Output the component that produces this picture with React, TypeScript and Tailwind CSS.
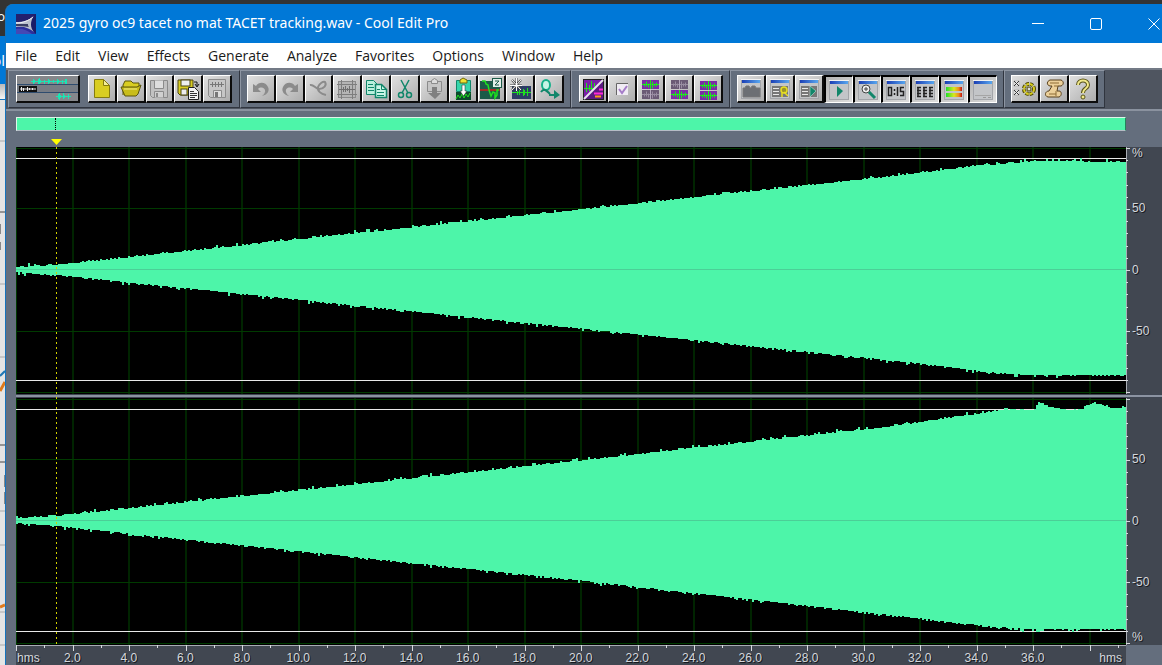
import type { ReactNode } from "react";

const menus = [
  "File",
  "Edit",
  "View",
  "Effects",
  "Generate",
  "Analyze",
  "Favorites",
  "Options",
  "Window",
  "Help",
];

const WAVE = "#4df5a9";
const TEAL = "#11866a";
const GRAY = "#8b8b8b";
const LIME = "#1fe01f";

/* ---------- waveform geometry ---------- */

const W = 1110;
const H = 247;
const MID = 123;
const STEP = 56.5;

type Point = [number, number];

function makeRandom(seed: number) {
  let s = seed;
  return () => {
    s = (s * 1103515245 + 12345) % 2147483648;
    return s / 2147483648;
  };
}

function levelAt(points: Point[], x: number) {
  for (let i = 1; i < points.length; i++) {
    const [x0, y0] = points[i - 1];
    const [x1, y1] = points[i];
    if (x <= x1) return y0 + ((y1 - y0) * (x - x0)) / (x1 - x0);
  }
  return points[points.length - 1][1];
}

function spike(r: number) {
  if (r > 0.97) return 3;
  if (r > 0.9) return 2;
  return r > 0.6 ? 1 : 0;
}

function envelope(top: Point[], bottom: Point[], seed: number) {
  const rand = makeRandom(seed);
  const upper: string[] = [];
  const lower: string[] = [];
  for (let x = 0; x < W; x += 2) {
    const up = Math.round(levelAt(top, x) - spike(rand()));
    const down = Math.round(levelAt(bottom, x) + spike(rand()));
    upper.push(`L${x} ${up}H${x + 2}`);
    lower.unshift(`L${x + 2} ${down}H${x}`);
  }
  return `M0 ${MID}${upper.join("")}${lower.join("")}Z`;
}

const leftPath = envelope(
  [[0, 120], [40, 118], [560, 63], [860, 31], [960, 19], [1020, 14], [1110, 15]],
  [[0, 125], [40, 128], [560, 181], [900, 216], [970, 225], [1010, 228], [1110, 228]],
  7,
);

const rightPath = envelope(
  [[0, 120], [40, 118], [560, 63], [870, 29], [960, 16], [985, 12], [1018, 12], [1022, 4], [1030, 8], [1040, 11], [1066, 13], [1072, 7], [1078, 5], [1090, 8], [1098, 11], [1110, 9]],
  [[0, 125], [40, 128], [560, 182], [900, 220], [970, 228], [1010, 231], [1019, 231], [1022, 234], [1026, 231], [1110, 231]],
  31,
);

const verticals = Array.from({ length: 19 }, (_, i) => (i + 1) * STEP);
const timeLabels = Array.from({ length: 18 }, (_, i) => `${(i + 1) * 2}.0`);

function Channel({ path, lines }: { path: string; lines: [number, number] }) {
  return (
    <svg
      className="block min-h-0 w-full flex-1 bg-black"
      viewBox={`0 0 ${W} ${H}`}
      preserveAspectRatio="none"
    >
      {verticals.map((x) => (
        <rect key={x} x={Math.round(x) - 1} y="0" width="2" height={H} fill="#002400" />
      ))}
      {[1, 61, 184, 245].map((y) => (
        <rect key={y} x="0" y={y} width={W} height="1" fill="#003a00" />
      ))}
      <rect x="0" y="0" width="1" height={H} fill="#003a00" />
      {lines.map((y) => (
        <rect key={y} x="0" y={y} width={W} height="1" fill="#e8e8e8" />
      ))}
      <path d={path} fill={WAVE} shapeRendering="crispEdges" />
      <rect x="0" y="122" width={W} height="1" fill="#4bcf97" />
    </svg>
  );
}

function Scale({ labels, unit }: { labels: string[]; unit: "top" | "bottom" }) {
  return (
    <div className="flex min-h-0 flex-1">
      <svg className="h-full w-[5px]" viewBox={`0 0 5 ${H}`} preserveAspectRatio="none">
        <rect x="0" y="0" width="1" height={H} fill="#a9adb5" />
        {Array.from({ length: 21 }, (_, i) => (
          <rect
            key={i}
            x="0"
            y={Math.round(1 + i * 12.2)}
            width={i % 5 === 0 ? 4 : 2}
            height="1"
            fill="#d6d9de"
          />
        ))}
      </svg>
      <div className="grid flex-1 grid-rows-[1fr_2fr_2fr_2fr_1fr] pb-[2px] pl-px text-[12px] leading-3 text-[#d5d8dd] [text-shadow:1px_1px_0_#15181d]">
        <span>{unit === "top" ? "%" : ""}</span>
        {labels.map((l) => (
          <span key={l} className="self-center">
            {l}
          </span>
        ))}
        <span className="self-end">{unit === "bottom" ? "%" : ""}</span>
      </div>
    </div>
  );
}

/* ---------- toolbar ---------- */

function Group({ children }: { children: ReactNode }) {
  return (
    <div className="flex shrink-0 items-start border border-t-[#8d95a2] border-l-[#8d95a2] border-r-[#30353f] border-b-[#30353f] bg-[#646e7d] px-[6px] pt-1">
      {children}
    </div>
  );
}

function Tool({ name, on, children }: { name: string; on?: boolean; children: ReactNode }) {
  return (
    <button
      aria-label={name}
      className={
        on
          ? "flex h-7 min-w-0 flex-1 items-center justify-center border border-t-2 border-l-2 border-t-black border-l-black border-r-white border-b-white bg-linear-to-br from-[#b4b4b4] to-[#dedede]"
          : "flex h-7 min-w-0 flex-1 items-center justify-center border border-r-2 border-b-2 border-t-white border-l-white border-r-[#0c0c0c] border-b-[#0c0c0c] bg-linear-to-br from-[#e0e0e0] to-[#adadad]"
      }
    >
      <svg width="24" height="24" viewBox="0 0 24 24" fill="none" className="shrink-0">
        {children}
      </svg>
    </button>
  );
}

function Floppy({ fill, stroke }: { fill: string; stroke: string }) {
  return (
    <>
      <path d="M3.500 3.500h17v17h-15l-2-2z" fill={fill} stroke={stroke} />
      <path d="M7.500 3.500v8h9v-8" fill="#dedede" stroke={stroke} />
      <path d="M7.500 20.500v-6h9v6" fill="#d0d0d0" stroke={stroke} />
      <rect x="9" y="16" width="2" height="4" fill={stroke} />
    </>
  );
}

function MiniWindow({ children }: { children?: ReactNode }) {
  return (
    <>
      <rect x="2.500" y="2.500" width="19" height="19" fill="#c3c5c8" stroke="#a3a5a9" />
      <path d="M2 2.500h20" stroke="#f2f2f2" />
      <rect x="3" y="3" width="18" height="3" fill="url(#winbar)" />
      {children}
    </>
  );
}

function WaveBlock({ y, live }: { y: number; live: boolean }) {
  const top = y + 0.5;
  return (
    <>
      <rect x="4" y={y} width="17" height="9" fill={live ? "#7d2aa8" : "#6a5a75"} />
      <path
        d={`M4 ${top + 4}h17M6.500 ${top + 3}v3M8.500 ${top + 1}v5M10.500 ${top + 3}v4M14.500 ${top + 1}v7M16.500 ${top + 3}v3M18.500 ${top + 2}v4`}
        stroke={live ? "#19f019" : "#988da1"}
      />
      <path d={`M12.500 ${y}v9`} stroke={live ? "#19f019" : "#b3a8bc"} />
    </>
  );
}

function Toolbar() {
  return (
    <div className="flex h-[41px] shrink-0 overflow-hidden border-t-2 border-t-[#737a86] bg-[#4f5560] pb-px pl-[2px]">
      <Group>
        <button
          aria-label="Switch to Multitrack View"
          className="ml-px h-7 w-16 border border-r-2 border-b-2 border-t-white border-l-white border-r-[#0c0c0c] border-b-[#0c0c0c] bg-[#999]"
        >
          <svg width="61" height="25" viewBox="0 0 61 25" className="block" fill="none">
            <rect width="61" height="25" fill="#85878b" />
            <rect y="9" width="61" height="8" fill="#777c84" />
            <path d="M0 8.500h61M0 16.500h61" stroke="#2f4c6e" />
            <rect x="2" y="10" width="18" height="6" fill="#111" />
            <path d="M3 13h16M4.500 11v4M6.500 12v3M10.500 11v4M12.500 12v2M15.500 12v2" stroke="#eee" />
            <path
              d="M14 5.500h36M16.500 3v5M17.500 4v3M21.500 3v5M22.500 2v6M23.500 4v3M27.500 4v4M31.500 3v5M32.500 4v3M36.500 4v3M40.500 3v5M41.500 4v3M45.500 4v4M48.500 3v5M49.500 3v5"
              stroke="#19e6b4"
            />
            <path
              d="M39 20.500h15M41.500 18v5M42.500 17v7M43.500 19v3M46.500 17v6M47.500 19v3M51.500 18v5"
              stroke="#19e6b4"
            />
          </svg>
        </button>
        <div className="ml-2 mr-px flex w-[144px]">
          <Tool name="New">
            <path d="M4.500 2.500h9l6 6v12h-15z" fill="#d9cd22" stroke="#857b10" />
            <path d="M13.500 2.500v6h6z" fill="#f4ee9a" stroke="#857b10" />
          </Tool>
          <Tool name="Open">
            <path d="M4 18V8l2-4h6l2 2h6v4" fill="#d9cd22" stroke="#5a540c" />
            <path d="M2 10h16l4-2-3 9-2 2H6z" fill="#c9bd1a" stroke="#5a540c" />
            <path d="M5 12h13" stroke="#f2ec86" />
          </Tool>
          <Tool name="Save">
            <Floppy fill="#c2c2c2" stroke={GRAY} />
          </Tool>
          <Tool name="Save As">
            <path d="M2 3h15v15H4l-2-2z" fill="#d9cd22" stroke="#4a4510" />
            <rect x="5" y="3" width="9" height="6" fill="#eee" stroke="#4a4510" />
            <rect x="5" y="12" width="6" height="6" fill="#eee" stroke="#4a4510" />
            <path d="M18 5h3v4M19 7l2 3 2-3" stroke="#111" />
            <path d="M12.500 10.500h6l4 4v8h-10z" fill="#f3f3f3" stroke="#222" />
            <path d="M14 14.500h4M14 16.500h7M14 18.500h7M14 20.500h5" stroke="#333" />
          </Tool>
          <Tool name="Save Selection">
            <path d="M3.500 2.500h17v18h-15l-2-2z" fill="#c6c6c6" stroke={GRAY} />
            <path d="M5 7.500h14M7.500 5v5M10.500 5v5M13.500 5v5M16.500 5v5" stroke="#777" />
            <path d="M8.500 20.500v-7h8v7z" fill="#ddd" stroke={GRAY} />
            <rect x="10" y="15" width="3" height="5" fill="#777" />
          </Tool>
        </div>
      </Group>

      <Group>
        <div className="flex w-[317px]">
          <Tool name="Undo">
            <path d="M4 7v8h8l-3-3c3-3 8-1 7 3-.4 2-2 3-3 4 5-1 8-5 6-9-2-5-9-6-12-1z" fill={GRAY} />
          </Tool>
          <Tool name="Redo">
            <path d="M20 7v8h-8l3-3c-3-3-8-1-7 3 .4 2 2 3 3 4-5-1-8-5-6-9 2-5 9-6 12-1z" fill={GRAY} />
          </Tool>
          <Tool name="Repeat Last Command">
            <path d="M3 8c4-1 5 4 9 4 5 0 8-4 6-7-2-1-6 2-7 5-1 4 3 7 8 8" stroke={GRAY} strokeWidth="2" />
          </Tool>
          <Tool name="Trim">
            <rect x="3.500" y="4.500" width="17" height="16" fill="#b5b5b5" stroke={GRAY} />
            <path d="M2 7.500h20M2 17.500h20M6.500 3v19M17.500 3v19" stroke="#7d7d7d" />
            <path d="M4 12.500h16M8.500 10v5M10.500 9v6M12.500 11v3M14.500 9v7" stroke="#6f6f6f" />
          </Tool>
          <Tool name="Copy">
            <path d="M2.500 3.500h7l4 4v10h-11z" fill="#b9efdc" stroke={TEAL} />
            <path d="M4 7.500h5M4 10.500h6M4 13.500h6" stroke={TEAL} />
            <path d="M11.500 7.500h6l5 5v8h-11z" fill="#c9f5e6" stroke={TEAL} strokeWidth="1.5" />
            <path d="M17.500 7.500v5h5M13 12.500h3M13 15.500h7M13 18.500h7" stroke={TEAL} />
          </Tool>
          <Tool name="Cut">
            <path d="M8 3l7 13M16 3L9 16" stroke={TEAL} strokeWidth="1.500" />
            <circle cx="8" cy="18" r="2.500" stroke={TEAL} strokeWidth="1.5" />
            <circle cx="16" cy="18" r="2.500" stroke={TEAL} strokeWidth="1.5" />
          </Tool>
          <Tool name="Paste">
            <path d="M5.500 4.500h14v10h-14z" fill="#c6c6c6" stroke={GRAY} />
            <path d="M9.500 6.500v-3l3-2 3 2v3z" fill="#ddd" stroke={GRAY} />
            <path d="M10 10h5v6h4l-6 6-7-6h4z" fill="#808080" />
          </Tool>
          <Tool name="Mix Paste">
            <path d="M5.500 3.500h14v11h-14z" fill="#35d6ac" stroke={TEAL} />
            <path d="M9 6V3l3-2 4 2v3z" fill="#f0e232" stroke="#6f6810" />
            <rect x="5" y="15" width="15" height="8" fill="#0c4a2c" />
            <path d="M5 22l2-4 2 3 2-4 2 4 2-4 2 3 2-4" stroke={LIME} />
            <path d="M11 8h3v6h2l-3.500 5L9 14h2z" fill="#fff" stroke="#222" strokeWidth=".5" />
          </Tool>
          <Tool name="Silence">
            <rect x="1" y="4" width="20" height="18" fill="#1c5a48" />
            <path d="M1 13h20" stroke="#d31c1c" strokeWidth="1.500" />
            <path d="M3 4h3l1 3 2 1 1 5 2 6 2-4 2 1v5l2-3v-5h2" stroke={LIME} strokeWidth="1.5" />
            <rect x="13.500" y="1.500" width="9" height="9" fill="#e3efe9" stroke="#1c5a48" />
            <path d="M16 4h4l-4 4h4" stroke="#1c5a48" />
          </Tool>
          <Tool name="Noise Reduction">
            <rect x="4" y="9" width="19" height="13" fill="#2c3d66" />
            <path d="M4 15.500h19M9.500 14v4M11.500 13v5M15.500 12v7M16.500 13v5M19.500 11v8" stroke={LIME} />
            <path d="M8.500 1v13M2 8.500h12M4 3l9 10M13 3L4 13" stroke="#444" strokeWidth="2" />
            <path d="M8.500 1v13M2 8.500h12M4 3l9 10M13 3L4 13" stroke="#fff" />
          </Tool>
          <Tool name="Convert Sample Type">
            <ellipse cx="9" cy="8" rx="4" ry="5" fill="#c7f4e6" stroke="#17b08a" strokeWidth="2" />
            <path d="M4 15c3-4 5-2 9 2M12 18h8" stroke={TEAL} strokeWidth="2" />
            <path d="M17 13l6 5-6 4z" fill={TEAL} />
          </Tool>
        </div>
      </Group>

      <Group>
        <div className="flex w-[145px] pl-px">
          <Tool name="Spectral View">
            <rect x="2.500" y="2.500" width="20" height="20" fill="#7a1fa6" stroke="#222" />
            <path d="M3 11.500h13M5.500 6v9M8.500 8v6M10.500 4v11M13.500 6v7" stroke={LIME} />
            <path d="M22 3L3 22h19z" fill="#5a1a82" />
            <path d="M18 12.500h4M13 16.500h9" stroke="#ff2bd6" strokeWidth="2" />
            <path d="M14 19.500h6" stroke="#ff9c1a" strokeWidth="2" />
            <path d="M22 3L3 22" stroke="#e9e0f0" strokeWidth="2" />
          </Tool>
          <Tool name="Snap to Ruler">
            <rect x="7" y="7" width="11" height="11" fill="#f0ecf4" />
            <path d="M6.500 18V6.500H18" stroke="#666" />
            <path d="M9 12l3 4 5-7" stroke="#a57cc8" strokeWidth="2" />
          </Tool>
          <Tool name="Edit Left Channel">
            <WaveBlock y={3} live />
            <WaveBlock y={13} live={false} />
          </Tool>
          <Tool name="Edit Right Channel">
            <WaveBlock y={3} live={false} />
            <WaveBlock y={13} live />
          </Tool>
          <Tool name="Edit Both Channels">
            <WaveBlock y={4} live />
            <WaveBlock y={14} live />
          </Tool>
        </div>
      </Group>

      <Group>
        <div className="flex w-[260px]">
          <Tool name="Organizer Window">
            <MiniWindow>
              <path d="M4 11h2l1-2h3l1 2h1l1-2h3l1 2h4v9H4z" fill="#6c6f74" stroke="#777" />
            </MiniWindow>
          </Tool>
          <Tool name="Cue List">
            <MiniWindow>
              <rect x="4" y="9" width="16" height="11" fill="#777" />
              <path d="M5 11.500h6M5 14.500h6M5 17.500h6" stroke="#e8e8e8" />
              <circle cx="16" cy="13" r="3" fill="#9a9428" stroke="#e8df22" strokeWidth="1.500" />
              <path d="M14 16v4M16 15l4 4" stroke="#e8df22" strokeWidth="1.500" />
            </MiniWindow>
          </Tool>
          <Tool name="Play List">
            <MiniWindow>
              <rect x="4" y="9" width="16" height="11" fill="#777" />
              <path d="M5 11.500h6M5 14.500h6M5 17.500h6" stroke="#e8e8e8" />
              <path d="M13 9l6 5-6 6z" fill={TEAL} stroke="#d5eee6" strokeWidth=".5" />
            </MiniWindow>
          </Tool>
          <Tool name="Transport Controls" on>
            <MiniWindow>
              <path d="M10 8l6 5-6 6z" fill={TEAL} />
            </MiniWindow>
          </Tool>
          <Tool name="Zoom Controls" on>
            <MiniWindow>
              <circle cx="10" cy="11" r="4" fill="#eee" stroke="#444" />
              <path d="M8 11h4M10 9v4" stroke="#444" />
              <path d="M13 14l6 6" stroke={TEAL} strokeWidth="3" />
            </MiniWindow>
          </Tool>
          <Tool name="Time Window" on>
            <MiniWindow>
              <path
                d="M4.500 9.500h3v8h-3zM10.500 11v2M10.500 15v2M13.500 9v9M20 9.500h-3.500v4h3v4H16"
                stroke="#222"
                strokeWidth="1.500"
              />
            </MiniWindow>
          </Tool>
          <Tool name="Begin/End/Length" on>
            <MiniWindow>
              <path
                d="M4 9.500h4M10 9.500h4M16 9.500h4M4 12.500h4M10 12.500h4M16 12.500h4M4 15.500h4M10 15.500h4M16 15.500h4M4 18.500h4M10 18.500h4M16 18.500h4M5 9v10M11 9v10M17 9v10"
                stroke="#222"
                strokeWidth="1.500"
              />
            </MiniWindow>
          </Tool>
          <Tool name="Level Meters" on>
            <MiniWindow>
              <rect x="4" y="9" width="16" height="4" fill="url(#meter)" />
              <rect x="4" y="15" width="16" height="4" fill="url(#meter)" />
            </MiniWindow>
          </Tool>
          <Tool name="Status Bar" on>
            <MiniWindow>
              <path d="M4 17.500h16" stroke="#a5a5a5" />
              <path d="M12 19.500h3M17 19.500h3" stroke="#999" />
            </MiniWindow>
          </Tool>
        </div>
      </Group>

      <Group>
        <div className="flex w-[87px]">
          <Tool name="Settings">
            <path d="M1 4h5v5H1zM1 13h5v5H1z" fill="#eee" stroke="#999" strokeWidth=".5" />
            <path d="M1 4l5 5M6 4L1 9M1 13l5 5M6 13l-5 5" stroke="#333" />
            <circle cx="16" cy="12" r="5" stroke="#4f4a08" strokeWidth="4" strokeDasharray="3 1" />
            <circle cx="16" cy="12" r="5" stroke="#d8cc1c" strokeWidth="2" strokeDasharray="3 1" />
            <circle cx="16" cy="12" r="2" fill="#ddd" stroke="#4f4a08" />
          </Tool>
          <Tool name="Scripts">
            <path
              d="M8 3h11c3 1 3 5 0 6h-3l-1 5h2c3 0 3 5 0 6H6c-4-1-3-6 1-6l3-5H8c-4-1-3-5 0-6z"
              fill="#ecd09a"
              stroke="#59401c"
            />
            <path d="M8 6h9M12 9h4M7 17h7M14 14v5" stroke="#8c6a35" />
          </Tool>
          <Tool name="Help">
            <path d="M7 8c0-6 10-6 10 0 0 4-5 3-5 8" stroke="#59541a" strokeWidth="4" />
            <path d="M7 8c0-6 10-6 10 0 0 4-5 3-5 8" stroke="#f0e88a" strokeWidth="2" />
            <circle cx="12" cy="20" r="2" fill="#f0e88a" stroke="#59541a" />
          </Tool>
        </div>
      </Group>
    </div>
  );
}

/* ---------- window chrome ---------- */

function TitleBar() {
  return (
    <header className="flex h-[39px] shrink-0 items-center bg-[#0078d7] pl-[10px] text-white">
      <svg width="20" height="20" viewBox="0 0 20 20">
        <rect width="20" height="20" fill="#2b2f9c" />
        <path d="M0 0h20v7L8 9H0z" fill="#23206e" />
        <path d="M0 8c8 0 13-2 18-6-3 4-3 12 0 16-5-4-10-6-18-5z" fill="#b9bfcc" />
        <path d="M0 10h12c0 1 0 2 1 3-5-1-9-1-13-1z" fill="#3a3f63" />
        <path d="M0 9c7 0 12-2 17-6" stroke="#f2f4f8" fill="none" />
        <path d="M18 2c-4 5-4 12 0 16l2 2V0z" fill="#1a1c66" />
        <path d="M0 15c6-1 11 1 16 5H0z" fill="#4448b4" />
      </svg>
      <h1 className="ml-[7px] flex-1 truncate pb-[2px] font-['Noto_Sans',sans-serif] text-[14px] leading-5">
        2025 gyro oc9 tacet no mat TACET tracking.wav - Cool Edit Pro
      </h1>
      <div className="-mr-[21px] flex shrink-0">
        <button aria-label="Minimize" className="flex h-[39px] w-[58px] items-center justify-center">
          <svg width="12" height="12" viewBox="0 0 12 12">
            <path d="M0 5.500h12" stroke="#fff" />
          </svg>
        </button>
        <button aria-label="Maximize" className="flex h-[39px] w-[58px] items-center justify-center">
          <svg width="12" height="12" viewBox="0 0 12 12" fill="none">
            <rect x=".5" y=".5" width="11" height="11" rx="1.500" stroke="#fff" />
          </svg>
        </button>
        <button aria-label="Close" className="flex h-[39px] w-[58px] items-center justify-center">
          <svg width="12" height="12" viewBox="0 0 12 12">
            <path d="M.5.5l11 11M11.500.5l-11 11" stroke="#fff" />
          </svg>
        </button>
      </div>
    </header>
  );
}

function Backdrop() {
  return (
    <aside className="flex w-[5px] shrink-0 flex-col overflow-hidden text-[13px] leading-4 text-white">
      <div className="flex h-9 justify-end bg-[#333] pt-2">o</div>
      <div className="flex h-12 justify-end bg-[#0078d7] pt-4 text-[15px]">ol</div>
      <div className="h-[15px] bg-linear-to-b from-[#b9b9b9] to-[#f4f4f4]" />
      <div className="h-px bg-[#1473bd]" />
      <svg className="min-h-0 w-full flex-1" viewBox="0 0 5 565" preserveAspectRatio="none">
        <rect width="5" height="565" fill="#e4e4e4" />
        <path d="M0 41h5M0 184h5M0 257h5M0 411h5M0 445h5M0 512h5M0 545h5" stroke="#aaa" />
        <path d="M0 112h5M0 345h5M0 362h5" stroke="#444" />
        <path d="M0 124v10M0 142v8M5 375v12M5 392v12" stroke="#888" strokeWidth="2" />
        <path d="M0 276l5-5" stroke="#1f77b4" strokeWidth="2" />
        <path d="M0 291l5-9M0 507l5-2" stroke="#e07b1c" strokeWidth="3" />
      </svg>
    </aside>
  );
}

export default function App() {
  return (
    <div className="flex h-screen overflow-hidden bg-[#333] font-['Open_Sans','Noto_Sans',sans-serif]">
      {/* Shared gradients for the toolbar glyphs */}
      <svg className="absolute h-0 w-0" aria-hidden="true">
        <defs>
          <linearGradient id="winbar">
            <stop offset="0" stopColor="#1b3fb5" />
            <stop offset="1" stopColor="#58a6ee" />
          </linearGradient>
          <linearGradient id="meter">
            <stop offset="0" stopColor="#1ddf2a" />
            <stop offset=".5" stopColor="#d8e81f" />
            <stop offset=".8" stopColor="#f08a1c" />
            <stop offset="1" stopColor="#c01212" />
          </linearGradient>
        </defs>
      </svg>

      <Backdrop />

      <main className="mt-1 flex min-w-0 flex-1 flex-col overflow-hidden rounded-tl-lg border-l border-[#1473bd] bg-[#646e7d]">
        <TitleBar />

        <nav className="flex h-[25px] shrink-0 items-center bg-white text-[14px] leading-5 text-[#1a1a1a]">
          {menus.map((m) => (
            <button key={m} className="px-[9px]">
              {m}
            </button>
          ))}
        </nav>

        <Toolbar />

        <section className="flex min-h-0 flex-1 flex-col border-t-2 border-[#8a929f] pt-[6px] pl-[10px]">
          {/* Overview of the visible range */}
          <div className="mr-9 h-[14px] shrink-0 border border-t-[#dff5ea] border-l-[#dff5ea] border-r-[#23855a] border-b-[#b5bdc6] bg-[#4df5a9] pl-[38px]">
            <div className="h-3 w-0 border-l border-dotted border-black" />
          </div>

          <div className="flex h-4 shrink-0 items-end pb-[2px] pl-[35px]">
            <svg width="11" height="6" viewBox="0 0 11 6">
              <path d="M0 0h11L5.500 6z" fill="#ffff00" />
            </svg>
          </div>

          <div className="flex min-h-0 flex-1">
            <div className="relative flex min-w-0 flex-1 flex-col">
              <Channel path={leftPath} lines={[11, 233]} />
              <div className="h-1 shrink-0 border-t border-b border-t-[#3f4652] border-b-[#3f4652] bg-[#8b93a1]" />
              <Channel path={rightPath} lines={[11, 233]} />
              {/* Edit cursor laid over both channels */}
              <div className="absolute inset-y-0 left-10 w-px bg-[repeating-linear-gradient(to_bottom,#d0d000_0_2px,transparent_2px_5px)]" />
            </div>
            <div className="flex w-9 shrink-0 flex-col bg-[#414751] font-['Liberation_Sans',Arial,sans-serif]">
              <Scale labels={["50", "0", "-50"]} unit="top" />
              <div className="h-1 shrink-0 border-t border-b border-t-[#3f4652] border-b-[#3f4652] bg-[#8b93a1]" />
              <Scale labels={["50", "0", "-50"]} unit="bottom" />
            </div>
          </div>

          {/* Time ruler */}
          <div className="mr-9 shrink-0 bg-[#414751] font-['Liberation_Sans',Arial,sans-serif]">
            <svg className="block h-[6px] w-full" viewBox={`0 0 ${W} 6`} preserveAspectRatio="none">
              <rect width={W} height="1" fill="#a9adb5" />
              {Array.from({ length: 40 }, (_, i) => (
                <rect
                  key={i}
                  x={Math.round((i * STEP) / 2)}
                  y="0"
                  width="1"
                  height={i % 2 === 0 ? 6 : 3}
                  fill="#d6d9de"
                />
              ))}
            </svg>
            <div className="grid grid-cols-[28px_repeat(18,1fr)_65px] text-center text-[12px] leading-[14px] text-[#d5d8dd] [text-shadow:1px_1px_0_#15181d]">
              <span className="pl-px text-left">hms</span>
              {timeLabels.map((t) => (
                <span key={t}>{t}</span>
              ))}
              <span className="pr-1 text-right">hms</span>
            </div>
          </div>
        </section>
      </main>
    </div>
  );
}
